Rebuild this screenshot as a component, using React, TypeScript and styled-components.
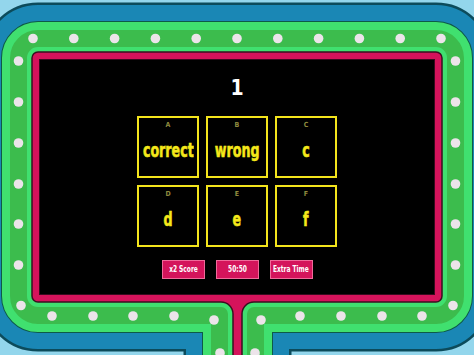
import React from "react";
import styled, { createGlobalStyle } from "styled-components";

const GlobalStyle = createGlobalStyle`
  html, body { margin: 0; padding: 0; background: #93d6ec; overflow: hidden; }
  #root { width: 474px; height: 355px; }
`;

const FONT = `"DejaVu Sans Condensed", "DejaVu Sans", sans-serif`;

const Stage = styled.div`
  position: relative;
  isolation: isolate;
  width: 474px;
  height: 355px;
  overflow: hidden;
  box-sizing: border-box;
  padding: 60px 40px 0 40px;
  background: #93d6ec;
  font-family: ${FONT};
`;

const FrameArt = styled.svg`
  position: absolute;
  inset: 0;
  z-index: -1;
`;

const Screen = styled.main`
  height: 234px;
  background: #000;
  box-shadow: 0 0 0 1px #3a0a1e;
  display: flex;
  flex-direction: column;
  align-items: center;
  padding-top: 16px;
  box-sizing: border-box;
`;

const Squeeze = styled.span<{ $x: number }>`
  display: inline-block;
  white-space: nowrap;
  transform: scaleX(${(p) => p.$x});
`;

const QuestionNumber = styled.div`
  color: #fff;
  font-weight: 700;
  font-size: 21px;
  line-height: 24px;
  height: 24px;
`;

const AnswerGrid = styled.div`
  margin-top: 16px;
  display: grid;
  grid-template-columns: repeat(3, 62px);
  grid-auto-rows: 62px;
  gap: 7px;
`;

const Card = styled.div`
  box-sizing: border-box;
  border: 2px solid #f3e41c;
  background: #000;
  display: flex;
  flex-direction: column;
  align-items: center;
  padding-top: 3px;
`;

const CardLetter = styled.span`
  color: #8e8a3e;
  font-size: 7px;
  font-weight: 700;
  line-height: 9px;
`;

const CardText = styled.span`
  flex: 1;
  display: flex;
  align-items: center;
  justify-content: center;
  padding-bottom: 6px;
  color: #f5e81a;
  font-size: 19px;
  font-weight: 700;
  white-space: nowrap;
  -webkit-text-stroke: 0.5px #f5e81a;
`;

const PowerUps = styled.div`
  margin-top: 13px;
  display: flex;
  gap: 11px;
`;

const PowerButton = styled.button`
  width: 43px;
  height: 19px;
  padding: 0;
  box-sizing: border-box;
  border: 1px solid #ef6a9a;
  background: #d4145b;
  color: #fff;
  font-family: ${FONT};
  font-weight: 700;
  font-size: 8px;
  display: flex;
  align-items: center;
  justify-content: center;
  overflow: visible;
`;

const FRAME_PATH =
  "M 38 52 H 436 A 6 6 0 0 1 442 58 V 296 A 6 6 0 0 1 436 302 H 254 A 12 12 0 0 0 242 314 V 420 H 233 V 314 A 12 12 0 0 0 221 302 H 38 A 6 6 0 0 1 32 296 V 58 A 6 6 0 0 1 38 52 Z";

const dots: [number, number][] = [];
for (let k = 0; k <= 10; k++) dots.push([33 + 40.8 * k, 38.5]);
[61, 102, 143, 184, 224, 265].forEach((y) => {
  dots.push([18.5, y]);
  dots.push([455.5, y]);
});
dots.push([21, 305.5], [453, 305.5]);
[52, 93, 133, 174].forEach((x) => dots.push([x, 316]));
[300, 341, 382, 422].forEach((x) => dots.push([x, 316]));
dots.push([214, 320], [261, 320], [220, 353], [255, 353]);

function Frame() {
  return (
    <FrameArt width="474" height="355" viewBox="0 0 474 355">
      <g fill="none" strokeLinejoin="round">
        <path d={FRAME_PATH} stroke="#0c4b5b" strokeWidth={99} />
        <path d={FRAME_PATH} stroke="#1a87b5" strokeWidth={94} />
        <path d={FRAME_PATH} stroke="#0e5a48" strokeWidth={62} />
        <path d={FRAME_PATH} stroke="#40e06f" strokeWidth={60} />
        <path d={FRAME_PATH} stroke="#3cbc4d" strokeWidth={44} />
        <path d={FRAME_PATH} stroke="#40e06f" strokeWidth={10} />
      </g>
      <path d={FRAME_PATH} fill="#d5135b" stroke="#3a1020" strokeWidth={1.5} />
      {dots.map(([x, y], i) => (
        <circle key={i} cx={x} cy={y} r={4.8} fill="#ece4ea" />
      ))}
    </FrameArt>
  );
}

const answers = [
  { letter: "A", text: "correct" },
  { letter: "B", text: "wrong" },
  { letter: "C", text: "c" },
  { letter: "D", text: "d" },
  { letter: "E", text: "e" },
  { letter: "F", text: "f" },
];

const powerUps = ["x2 Score", "50:50", "Extra Time"];

export default function App() {
  return (
    <>
      <GlobalStyle />
      <Stage>
        <Frame />
        <Screen>
          <QuestionNumber>1</QuestionNumber>
          <AnswerGrid>
            {answers.map((a) => (
              <Card key={a.letter}>
                <CardLetter>{a.letter}</CardLetter>
                <CardText>
                  <Squeeze $x={0.74}>{a.text}</Squeeze>
                </CardText>
              </Card>
            ))}
          </AnswerGrid>
          <PowerUps>
            {powerUps.map((p) => (
              <PowerButton key={p}>
                <Squeeze $x={0.82}>{p}</Squeeze>
              </PowerButton>
            ))}
          </PowerUps>
        </Screen>
      </Stage>
    </>
  );
}
